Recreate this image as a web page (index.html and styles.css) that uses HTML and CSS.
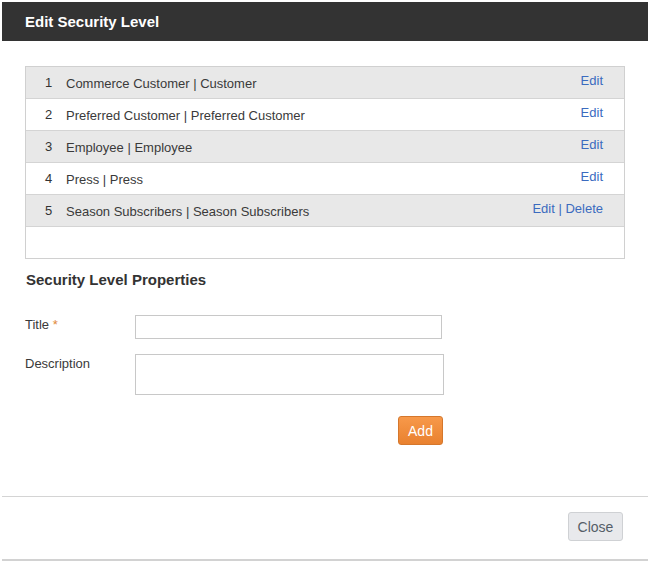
FILE: index.html
```html
<!DOCTYPE html>
<html lang="en">

<head>
    <meta charset="UTF-8" />
    <meta name="viewport" content="width=device-width, initial-scale=1.0" />
    <title>Edit Security Level</title>
    <link rel="stylesheet" href="styles.css">
</head>

<body>
    <div class="modal">
        <div class="modal-header">Edit Security Level</div>

        <div class="modal-body">
            <div class="levels">
                <div class="level">
                    <span class="num">1</span>
                    <span class="name">Commerce Customer | Customer</span>
                    <span class="actions"><a href="#">Edit</a></span>
                </div>
                <div class="level">
                    <span class="num">2</span>
                    <span class="name">Preferred Customer | Preferred Customer</span>
                    <span class="actions"><a href="#">Edit</a></span>
                </div>
                <div class="level">
                    <span class="num">3</span>
                    <span class="name">Employee | Employee</span>
                    <span class="actions"><a href="#">Edit</a></span>
                </div>
                <div class="level">
                    <span class="num">4</span>
                    <span class="name">Press | Press</span>
                    <span class="actions"><a href="#">Edit</a></span>
                </div>
                <div class="level">
                    <span class="num">5</span>
                    <span class="name">Season Subscribers | Season Subscribers</span>
                    <span class="actions"><a href="#">Edit</a> | <a href="#">Delete</a></span>
                </div>
                <div class="level"></div>
            </div>

            <h3 class="section-title">Security Level Properties</h3>

            <form class="props">
                <div class="field">
                    <label for="title">Title <span class="req">*</span></label>
                    <input type="text" id="title" class="title-input">
                </div>
                <div class="field">
                    <label for="desc">Description</label>
                    <textarea id="desc" class="desc-input"></textarea>
                </div>
                <div class="form-actions">
                    <button type="button" class="btn btn-add">Add</button>
                </div>
            </form>
        </div>

        <div class="modal-footer">
            <button type="button" class="btn btn-close">Close</button>
        </div>
    </div>
</body>

</html>
```

FILE: styles.css
```css
body {
    font-family: "Liberation Sans", Arial, sans-serif;
    font-size: 13px;
    line-height: 15px;
    color: #3a3a3a;
    background-color: #fff;
    margin: 0;
}

.modal {
    margin: 2px;
    width: 646px;
    border-bottom: 2px solid #d2d2d2;
}

.modal-header {
    background-color: #333;
    color: #fff;
    font-size: 15px;
    font-weight: bold;
    line-height: 18px;
    height: 39px;
    box-sizing: border-box;
    padding: 11px 23px 0;
}

.modal-body {
    padding: 25px 23px 51px;
}

.levels {
    border: 1px solid #d0d0d0;
}

.level {
    display: flex;
    align-items: flex-start;
    height: 31px;
    border-bottom: 1px solid #d4d4d4;
    background-color: #fff;
}

.level:nth-child(odd) {
    background-color: #e8e8e8;
}

.level:last-child {
    border-bottom: none;
}

.num {
    width: 40px;
    box-sizing: border-box;
    padding: 8px 0 0 19px;
    color: #333;
}

.name {
    flex: 1;
    padding-top: 9px;
    color: #3a3a3a;
}

.actions {
    padding: 6px 21px 0 0;
    color: #3b6bbf;
}

.actions a {
    color: #3b6bbf;
    text-decoration: none;
}

.section-title {
    margin: 12px 0 0;
    padding-left: 1px;
    font-size: 15px;
    line-height: 18px;
    color: #333;
}

.props {
    width: 420px;
    margin-top: 26px;
}

.field {
    display: flex;
    align-items: flex-start;
    margin-bottom: 15px;
}

.field label {
    width: 110px;
    padding-top: 2px;
    color: #3a3a3a;
}

.req {
    color: #e0883a;
}

.title-input,
.desc-input {
    box-sizing: border-box;
    border: 1px solid #c8c8c8;
    border-radius: 0;
    margin: 0;
    padding: 3px 5px;
    font-family: inherit;
    font-size: 13px;
}

.title-input {
    width: 307px;
    height: 24px;
}

.desc-input {
    width: 309px;
    height: 41px;
    resize: none;
}

.form-actions {
    display: flex;
    justify-content: flex-end;
    padding-top: 6px;
    width: 418px;
}

.btn {
    font-family: inherit;
    font-size: 14px;
    line-height: 16px;
    height: 29px;
    box-sizing: border-box;
    border-radius: 3px;
    cursor: pointer;
    margin: 0;
}

.btn-add {
    width: 45px;
    padding: 0;
    color: #fff;
    background: linear-gradient(#f7994a, #e9812f);
    border: 1px solid #d5772c;
}

.modal-footer {
    display: flex;
    justify-content: flex-end;
    border-top: 1px solid #d4d4d4;
    padding: 15px 25px 18px;
}

.btn-close {
    width: 55px;
    padding: 0;
    color: #555e68;
    background-color: #e8e9ec;
    border: 1px solid #cfd1d4;
}
```
